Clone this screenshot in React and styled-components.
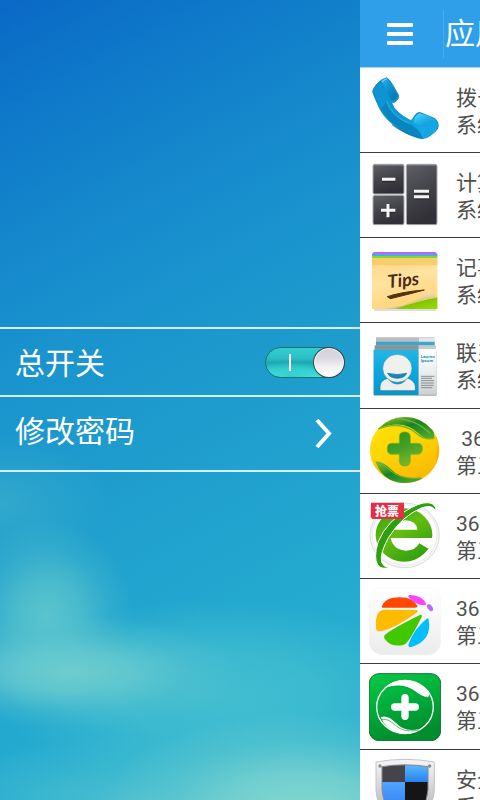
import React, { useState } from "react";
import styled, { createGlobalStyle } from "styled-components";

const GlobalStyle = createGlobalStyle`
  *, *::before, *::after { box-sizing: border-box; }
  body {
    margin: 0;
    background: #fff;
    font-family: Roboto, "Noto Sans CJK SC", sans-serif;
  }
`;

const Screen = styled.div`
  display: grid;
  grid-template-columns: 3fr 1fr;
  height: 100vh;
  overflow: hidden;
`;

const Drawer = styled.aside`
  display: flex;
  flex-direction: column;
  justify-content: center;
  min-width: 0;
  padding-bottom: 1px;
  background:
    radial-gradient(ellipse 56% 12% at 84% 101%, #82d6ce 0%, #7ad3cfdd 35%, #6accd066 70%, #6accd000 100%),
    radial-gradient(ellipse 48% 7% at 20% 84%, #6dccce 0%, #68cacfcc 35%, #5ac4ce55 70%, #5ac4ce00 100%),
    radial-gradient(ellipse 24% 12% at 13% 77%, #60c8cde6 0%, #5cc5ccaa 40%, #5ac4ca44 70%, #5ac4ca00 100%),
    radial-gradient(ellipse 60% 12% at 60% 87%, #4ac2cfcc 0%, #4ac2cf99 45%, #4ac2cf00 100%),
    radial-gradient(ellipse 60% 8% at 40% 100%, #55c3cfcc 0%, #55c3cf00 100%),
    radial-gradient(ellipse 30% 9% at 0% 63%, #42b2cc88 0%, #42b2cc00 100%),
    linear-gradient(152deg, #0a68c6 0%, #0e78c9 12%, #1588cc 26%, #1a93ce 38%, #1e9ccd 52%, #22a6cf 70%, #26aed0 85%, #2aafcf 100%);
`;

const Settings = styled.div`
  border-top: 2px solid #d6edf6;
`;

const SettingRow = styled.div`
  display: flex;
  align-items: center;
  justify-content: space-between;
  height: ${(p) => (p.$tall ? 75 : 68)}px;
  padding: 0 15px;
  border-bottom: 2px solid #d6edf6;
  color: #fff;
  font-size: 30px;
`;

const SettingButton = styled(SettingRow).attrs({ as: "button", type: "button" })`
  width: 100%;
  padding-right: 28px;
  border-width: 0 0 2px;
  background: none;
  font-family: inherit;
  text-align: left;
  cursor: pointer;
`;

const SettingLabel = styled.label`
  align-self: flex-start;
  line-height: 70px;
  cursor: pointer;
`;

const Switch = styled.input.attrs({ type: "checkbox", role: "switch" })`
  appearance: none;
  display: flex;
  flex-direction: ${(p) => (p.checked ? "row" : "row-reverse")};
  align-items: center;
  justify-content: space-between;
  width: 80px;
  height: 31px;
  margin: 0;
  padding: ${(p) => (p.checked ? "0 0 0 23px" : "0 23px 0 0")};
  border: 1px solid #147568;
  border-radius: 16px;
  background: ${(p) =>
    p.checked
      ? "radial-gradient(ellipse 30px 14px at 26px 28px, #35cfd2 0%, #35cfd200 100%), linear-gradient(#35cdd0 0%, #2bbfc5 35%, #1fa7b2 50%, #34ced0 75%, #42e5e3 100%)"
      : "linear-gradient(#9aa, #cdd)"};
  cursor: pointer;

  &::before {
    content: "";
    width: 2px;
    height: 17px;
    background: #fff;
  }

  &::after {
    content: "";
    width: 32px;
    height: 31px;
    margin: 0 -1px;
    border: 1px solid #37474b;
    border-radius: 50%;
    background: linear-gradient(#d5d0da 0%, #dcd8e0 35%, #f2f1f3 65%, #fff 100%);
    box-shadow: inset 0 0 0 1px #f4f4f6;
  }
`;

const AppPanel = styled.main`
  min-width: 0;
  overflow: hidden;
  background: #fff;
  white-space: nowrap;
`;

const TopBar = styled.header`
  display: flex;
  align-items: center;
  gap: 1px;
  height: 68px;
  border-bottom: 1px solid #a9d8f5;
  background: #2e9fe8;
`;

const MenuButton = styled.button`
  display: flex;
  flex: none;
  align-items: center;
  justify-content: center;
  width: 84px;
  height: 48px;
  padding: 0 4px 0 0;
  border: 0;
  border-right: 1px solid #49acec;
  background: none;
  cursor: pointer;
`;

const Title = styled.h1`
  margin: 0;
  color: #fff;
  font-size: 30px;
  font-weight: 400;
  line-height: 40px;
`;

const AppList = styled.ul`
  margin: 0;
  padding: 0;
  list-style: none;
`;

const AppRow = styled.li`
  display: flex;
  align-items: center;
  gap: 15px;
  height: 85px;
  padding-left: 9px;
  border-bottom: 1px solid #3c3c40;

  &:nth-child(4n) { height: 86px; }

  svg { flex: none; }
`;

const AppText = styled.div`
  padding-top: 3px;
  color: #505050;
  font-size: 21px;
  line-height: 27px;
  white-space: pre;
`;

const AppIcon = ({ y, children }) => (
  <svg width="72" height="68" viewBox={`27 ${y} 216 204`} aria-hidden="true">
    {children}
  </svg>
);

const Stops = ({ id, colors, x2 = 0, y2 = 1 }) => (
  <linearGradient id={id} x1="0" y1="0" x2={x2} y2={y2}>
    {colors.map((c, i) => (
      <stop key={i} offset={i / (colors.length - 1)} stopColor={c} />
    ))}
  </linearGradient>
);

const PhoneIcon = () => (
  <AppIcon y={228}>
    <defs>
      <Stops id="ph" colors={["#0b8fcb", "#0a9ad8", "#18b2ee"]} x2={1} />
      <Stops id="ph2" colors={["#22b6ea", "#0d8cc8", "#0872ac"]} x2={1} />
      <Stops id="ph3" colors={["#5fd6fa", "#22b2ea", "#0e8fce"]} x2={0.8} />
    </defs>
    <path d="M38 276 Q38 267 48 255 Q65 235 80 233 Q87 236 98 254 L116 286 Q118 294 111 301 Q104 309 95 309 Q105 337 150 361 Q156 363 161 352 Q169 337 179 337 L224 355 Q236 365 235 377 Q235 389 216 403 Q199 417 186 416 Q153 411 116 386 Q78 361 60 328 Q45 297 38 276Z" fill="url(#ph)" stroke="#0879b4" strokeWidth="2" />
    <path d="M66 246 Q73 236 81 237 Q90 244 112 284 Q115 293 104 299 Q96 304 91 298Z" fill="url(#ph2)" />
    <path d="M41 272 Q56 252 66 246 L91 298 Q84 306 76 303 L56 306Z" fill="#0e94d0" />
    <path d="M66 246 Q74 236 81 237" fill="none" stroke="#62d4f6" strokeWidth="4" />
    <path d="M80 303 Q92 348 146 371 Q176 383 188 412 Q150 405 116 384 Q82 360 64 328Z" fill="#0a84bf" />
    <path d="M80 303 Q92 346 146 370" fill="none" stroke="#30b6e6" strokeWidth="3" />
    <path d="M178 340 Q163 347 161 368 L196 382 Q203 365 228 360 Q219 350 178 340Z" fill="url(#ph3)" />
    <path d="M196 383 Q205 364 231 363 Q236 378 218 397 Q204 409 190 412Z" fill="#15a5e2" />
    <path d="M96 374 Q130 400 186 414" fill="none" stroke="#066799" strokeWidth="4" opacity=".6" />
  </AppIcon>
);

const CalcIcon = () => (
  <AppIcon y={33}>
    <defs><Stops id="ca" colors={["#606067", "#45454c", "#303036"]} x2={0.3} /></defs>
    <g fill="url(#ca)" stroke="#a9a9ad" strokeWidth="3">
      <rect x="39" y="43" width="93" height="89" rx="5" />
      <rect x="39" y="136" width="93" height="88" rx="5" />
      <rect x="139" y="43" width="92" height="181" rx="5" />
    </g>
    <path d="M42 46H129M142 46H228" stroke="#77777e" strokeWidth="3" />
    <path d="M67 92H105M65 185H106M87 163V205M163 128H207M163 144H207" stroke="#18181c" strokeWidth="9" opacity=".5" />
    <path d="M66 88H106M63 181H106M84 162V202M162 124H207M162 140H207" stroke="#f5f5f5" strokeWidth="9" />
  </AppIcon>
);

const ScriptText = styled.text`
  font-family: Lato, sans-serif;
  font-size: 54px;
  font-style: italic;
  font-weight: 700;
`;

const TipsIcon = () => (
  <AppIcon y={288}>
    <defs>
      <Stops id="ti" colors={["#ffd983", "#ffe3a0", "#ffd57c"]} x2={0.3} />
      <Stops id="ti2" colors={["#fff8e2", "#f0dca6", "#c4aa6e"]} x2={0.6} />
      <Stops id="ti3" colors={["#69b000", "#9bdb00"]} x2={1} />
    </defs>
    <path d="M42 480H229" stroke="#b7b7b7" strokeWidth="5" opacity=".6" />
    <path d="M36 316Q36 306 46 306H223Q232 307 232 316Z" fill="#bd65ee" />
    <path d="M36 312H232V320H36Z" fill="#48aaf0" />
    <path d="M36 318H232V326H36Z" fill="#8cd32a" />
    <path d="M36 325H232V477H36Z" fill="url(#ti)" />
    <path d="M36 325H232V346H36Z" fill="#f7c660" opacity=".7" />
    <path d="M100 477Q170 455 232 441V477Z" fill="url(#ti3)" />
    <path d="M72 476Q165 465 207 422L232 443Q165 452 106 477Z" fill="url(#ti2)" />
    <ScriptText x="85" y="414" fill="#4b2915" transform="rotate(-6 85 414)">Tips</ScriptText>
    <path d="M82 440Q127 425 193 420Q146 433 91 446Z" fill="#55310f" stroke="#55310f" strokeWidth="3" />
  </AppIcon>
);

const TinyText = styled.text`
  font-family: "Open Sans", sans-serif;
  font-size: 12px;
  font-weight: 700;
`;

const ContactsIcon = () => (
  <AppIcon y={34}>
    <defs>
      <Stops id="co" colors={["#24b5e4", "#0ba8dc", "#0797ca"]} />
      <Stops id="co2" colors={["#fff", "#eceeee", "#cbd0d2"]} />
    </defs>
    <path d="M48 50H223V86H48Z" fill="#b9bdc0" />
    <path d="M48 63H224V74H48Z" fill="#39a9cb" />
    <path d="M44 74H176V88H44Z" fill="#8c9295" />
    <path d="M176 74H228V88H176Z" fill="#c6cacc" />
    <path d="M177 51H223V63H177Z" fill="#e2e5e6" />
    <rect x="41" y="87" width="189" height="138" rx="3" fill="#a4a9aa" />
    <path d="M41 87H176V223H41Z" fill="url(#co)" />
    <path d="M176 85H230V222H176Z" fill="url(#co2)" />
    <path d="M60 210V199Q59 179 85 172Q93 189 112 190Q131 190 141 171Q165 180 166 197V210Z" fill="#eeeeec" stroke="#087caa" strokeWidth="2" />
    <ellipse cx="112" cy="143" rx="44" ry="42" fill="#f0f0ee" stroke="#3092b6" strokeWidth="2" />
    <path d="M83 158Q112 165 140 158Q135 172 112 173Q89 172 83 158Z" fill="#0d8cbf" stroke="#176181" strokeWidth="2" />
    <TinyText x="182" y="112" fill="#168db4">Lauren</TinyText>
    <TinyText x="182" y="124" fill="#168db4">Ipsum</TinyText>
    <path d="M183 167H223M183 173H216M183 180H222M183 187H222M183 194H221M183 201H217" stroke="#8b8d8e" strokeWidth="3" />
  </AppIcon>
);

const GuardIcon = () => (
  <AppIcon y={291}>
    <defs>
      <Stops id="gu" colors={["#ffec15", "#ffd600", "#f69e00"]} x2={0.5} />
      <Stops id="gu2" colors={["#91c72e", "#188326", "#4caa29"]} x2={0.8} />
      <Stops id="gu3" colors={["#2f8f22", "#3f9f26", "#74b52c"]} x2={0.4} />
    </defs>
    <ellipse cx="134" cy="390" rx="104" ry="99" fill="url(#gu)" />
    <path d="M31 386Q49 329 102 319Q139 314 170 342Q201 371 234 358L228 430Q205 483 156 485Q117 487 80 441Q60 415 33 425Z" fill="#ffd707" opacity=".5" />
    <path d="M56 325Q88 292 136 291Q184 291 218 331Q225 342 221 355Q198 362 174 339Q132 296 56 325Z" fill="url(#gu2)" />
    <path d="M54 327Q122 302 165 337Q196 365 224 353" fill="none" stroke="#79b72a" strokeWidth="4" />
    <path d="M106 295Q167 297 210 340" fill="none" stroke="#6db53c" strokeWidth="4" />
    <path d="M46 424Q67 422 92 447Q127 484 190 474Q154 495 110 486Q65 476 46 424Z" fill="url(#gu2)" />
    <path d="M49 428Q70 430 94 454Q126 480 183 474" fill="none" stroke="#6fad30" strokeWidth="4" />
    <path d="M118 350Q118 337 131 336H137Q151 337 151 351V370H174Q187 371 187 383V390Q186 402 174 403H151V423Q150 437 138 438H130Q118 436 118 423V403H95Q82 402 82 389V383Q83 370 96 370H118Z" fill="url(#gu3)" stroke="#78b31d" strokeWidth="2" />
  </AppIcon>
);

const BadgeText = styled.text`
  font-family: "Noto Sans CJK SC", sans-serif;
  font-size: 36px;
  font-weight: 900;
`;

const BrowserIcon = () => (
  <AppIcon y={36}>
    <defs><Stops id="br" colors={["#2f9f10", "#66bd10", "#2f9f10"]} x2={0.7} /></defs>
    <ellipse cx="134" cy="136" rx="104" ry="97" fill="#f5f5f5" stroke="#ddd" strokeWidth="3" />
    <ellipse cx="134" cy="135" rx="97" ry="90" fill="#fff" stroke="#e5e5e5" strokeWidth="2" />
    <ellipse cx="132" cy="135" rx="85" ry="80" fill="url(#br)" />
    <path d="M101 119Q105 92 136 91Q169 92 172 119Z" fill="#fff" />
    <path d="M92 144H226L205 176L178 160Q166 182 138 182Q100 180 92 144Z" fill="#fff" />
    <path d="M228 65Q231 51 217 41Q194 31 154 53Q81 89 54 157Q40 203 53 225Q64 240 91 232Q71 233 65 216Q59 190 86 142Q126 78 184 54Q218 41 228 65Z" fill="#2f9f10" stroke="#fff" strokeWidth="3" />
    <path d="M33 38H132V81L127 87H38L32 82Z" fill="#e62d44" />
    <BadgeText x="45" y="77" fill="#fff">抢票</BadgeText>
  </AppIcon>
);

const FanIcon = () => (
  <AppIcon y={291}>
    <defs><Stops id="fa" colors={["#fff", "#f7f7f7", "#ebebeb"]} /></defs>
    <rect x="28" y="292" width="214" height="202" rx="38" fill="url(#fa)" stroke="#f0f0f0" />
    <path d="M65 350Q75 322 119 322Q161 322 173 349Q172 353 165 353H70Q65 353 65 350Z" fill="#ff4900" />
    <path d="M145 320Q143 314 152 315Q187 317 198 340Q199 346 192 346Q167 345 145 320Z" fill="#ff42fb" />
    <ellipse cx="210" cy="353" rx="7" ry="12" transform="rotate(-36 210 353)" fill="#bd6cff" />
    <path d="M53 372Q60 357 90 359L170 360Q175 362 172 367Q93 423 56 424Q49 424 48 414Q46 385 53 372Z" fill="#ffbb00" />
    <path d="M73 437Q84 422 181 374Q187 373 185 381Q146 460 132 464Q93 474 74 446Q71 441 73 437Z" fill="#42c800" />
    <path d="M200 386Q205 383 206 390Q217 450 155 471Q142 472 146 461Q161 418 200 386Z" fill="#00bfff" />
  </AppIcon>
);

const DoctorIcon = () => (
  <AppIcon y={36}>
    <defs><Stops id="do" colors={["#08c945", "#00ad3b", "#008d2d"]} x2={0.3} /></defs>
    <rect x="28" y="38" width="214" height="201" rx="29" fill="url(#do)" stroke="#117431" strokeWidth="3" />
    <ellipse cx="135" cy="138" rx="85" ry="80" fill="none" stroke="#fff" strokeWidth="4" />
    <path d="M72 82Q96 58 135 58Q177 59 206 90Q211 99 204 109Q189 109 166 91Q127 61 72 82Z" fill="#fff" />
    <path d="M81 80Q129 66 165 95Q187 112 202 108" fill="none" stroke="#00a43a" strokeWidth="2" />
    <path d="M62 169Q81 160 108 186Q137 218 188 201Q157 223 118 217Q79 208 62 169Z" fill="#fff" />
    <path d="M66 175Q84 172 106 193Q132 217 178 207" fill="none" stroke="#00a43a" strokeWidth="2" />
    <path d="M135 110V166M104 138H166" stroke="#fff" strokeWidth="22" strokeLinecap="round" />
  </AppIcon>
);

const ShieldIcon = () => (
  <AppIcon y={294}>
    <defs>
      <Stops id="sh" colors={["#f6f6f6", "#ceced2", "#a6a6ab"]} />
      <Stops id="sh2" colors={["#53a2ff", "#1a6fea"]} />
      <Stops id="sh3" colors={["#65bbff", "#2383ef"]} />
      <clipPath id="shield"><path d="M66 320Q135 309 204 320V390Q201 450 135 486Q69 448 66 390Z" /></clipPath>
    </defs>
    <path d="M48 306Q135 290 223 306V391Q220 459 135 497Q51 459 48 391Z" fill="url(#sh)" stroke="#c4c4c8" strokeWidth="3" />
    <g clipPath="url(#shield)">
      <path d="M60 310H135V366H60Z" fill="#444449" />
      <path d="M135 310H210V366H135Z" fill="url(#sh3)" />
      <path d="M60 366H135V490H60Z" fill="url(#sh2)" />
      <path d="M135 366H210V490H135Z" fill="#151518" />
    </g>
    <path d="M66 320Q135 309 204 320V390Q201 450 135 486Q69 448 66 390Z" fill="none" stroke="#88888c" strokeWidth="3" />
    <circle cx="60" cy="318" r="5" fill="#8a8a8e" />
    <circle cx="209" cy="318" r="5" fill="#8a8a8e" />
  </AppIcon>
);

const APPS = [
  { icon: PhoneIcon, name: "拨号", kind: "系统" },
  { icon: CalcIcon, name: "计算", kind: "系统" },
  { icon: TipsIcon, name: "记事", kind: "系统" },
  { icon: ContactsIcon, name: "联系", kind: "系统" },
  { icon: GuardIcon, name: " 360", kind: "第三" },
  { icon: BrowserIcon, name: "360", kind: "第三" },
  { icon: FanIcon, name: "360", kind: "第三" },
  { icon: DoctorIcon, name: "360", kind: "第三" },
  { icon: ShieldIcon, name: "安全", kind: "系统" },
];

export default function App() {
  const [enabled, setEnabled] = useState(true);

  return (
    <>
      <GlobalStyle />
      <Screen>
        <Drawer>
          <Settings>
            <SettingRow>
              <SettingLabel htmlFor="master-switch">总开关</SettingLabel>
              <Switch
                id="master-switch"
                checked={enabled}
                onChange={(e) => setEnabled(e.target.checked)}
              />
            </SettingRow>
            <SettingButton $tall>
              <SettingLabel as="span">修改密码</SettingLabel>
              <svg width="17" height="31" viewBox="0 0 17 31" fill="none" aria-hidden="true">
                <path d="M2 2L14 15.500L2 29" stroke="#fff" strokeWidth="4" />
              </svg>
            </SettingButton>
          </Settings>
        </Drawer>
        <AppPanel>
          <TopBar>
            <MenuButton type="button" aria-label="菜单">
              <svg width="26" height="22" viewBox="0 0 26 22" aria-hidden="true">
                <g fill="#fff">
                  <rect width="26" height="4" rx="1" />
                  <rect y="9" width="26" height="4" rx="1" />
                  <rect y="18" width="26" height="4" rx="1" />
                </g>
              </svg>
            </MenuButton>
            <Title>应用</Title>
          </TopBar>
          <AppList>
            {APPS.map(({ icon: Icon, name, kind }, i) => (
              <AppRow key={i}>
                <Icon />
                <AppText>
                  <div>{name}</div>
                  <div>{kind}</div>
                </AppText>
              </AppRow>
            ))}
          </AppList>
        </AppPanel>
      </Screen>
    </>
  );
}
